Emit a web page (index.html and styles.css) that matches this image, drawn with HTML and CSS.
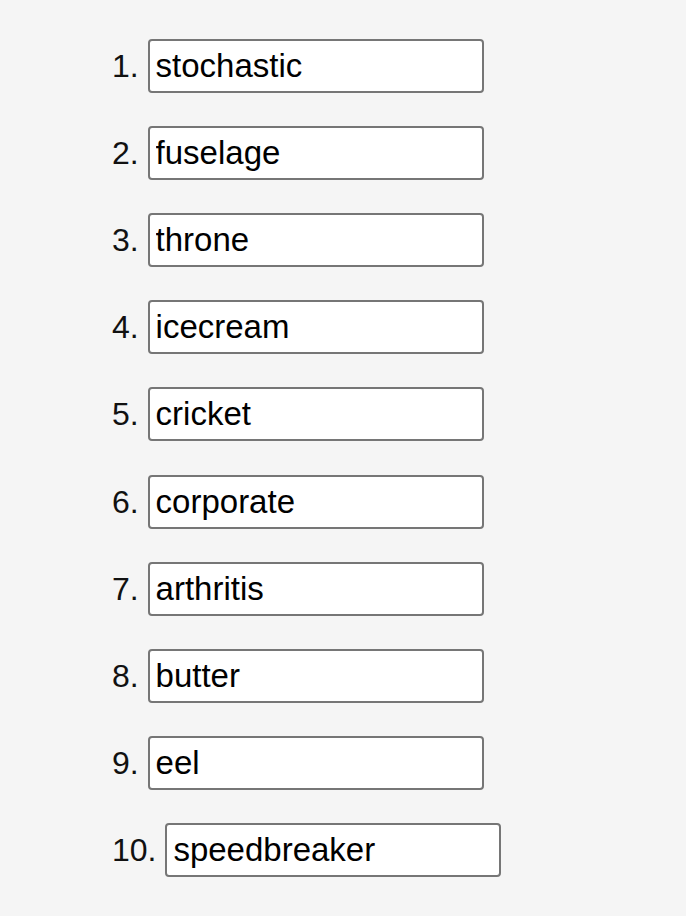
FILE: index.html
```html
<!DOCTYPE html>
<html>
<head>
<meta charset="utf-8">
<link rel="stylesheet" href="styles.css">
</head>
<body>
<ol class="word-list">
  <li class="word-item"><input class="word-input" type="text" value="stochastic"></li>
  <li class="word-item"><input class="word-input" type="text" value="fuselage"></li>
  <li class="word-item"><input class="word-input" type="text" value="throne"></li>
  <li class="word-item"><input class="word-input" type="text" value="icecream"></li>
  <li class="word-item"><input class="word-input" type="text" value="cricket"></li>
  <li class="word-item"><input class="word-input" type="text" value="corporate"></li>
  <li class="word-item"><input class="word-input" type="text" value="arthritis"></li>
  <li class="word-item"><input class="word-input" type="text" value="butter"></li>
  <li class="word-item"><input class="word-input" type="text" value="eel"></li>
  <li class="word-item"><input class="word-input" type="text" value="speedbreaker"></li>
</ol>
</body>
</html>
```
FILE: styles.css
```css
html, body {
  margin: 0;
  background: #f5f5f5;
}
body {
  font-family: "Liberation Sans", Arial, sans-serif;
  color: #111;
}
.word-list {
  margin: 39px 0 0 0;
  padding: 0 0 0 112px;
  list-style-position: inside;
}
.word-item {
  font-size: 32px;
  line-height: 54px;
  height: 54px;
  margin-bottom: 33.12px;
}
.word-input {
  box-sizing: border-box;
  width: 336px;
  height: 54px;
  font-family: "Liberation Sans", Arial, sans-serif;
  font-size: 33px;
  color: #000;
  background: #fff;
  border: 2px solid #767676;
  border-radius: 4px;
  padding: 0 6px;
  margin: 0;
  vertical-align: baseline;
}
```
